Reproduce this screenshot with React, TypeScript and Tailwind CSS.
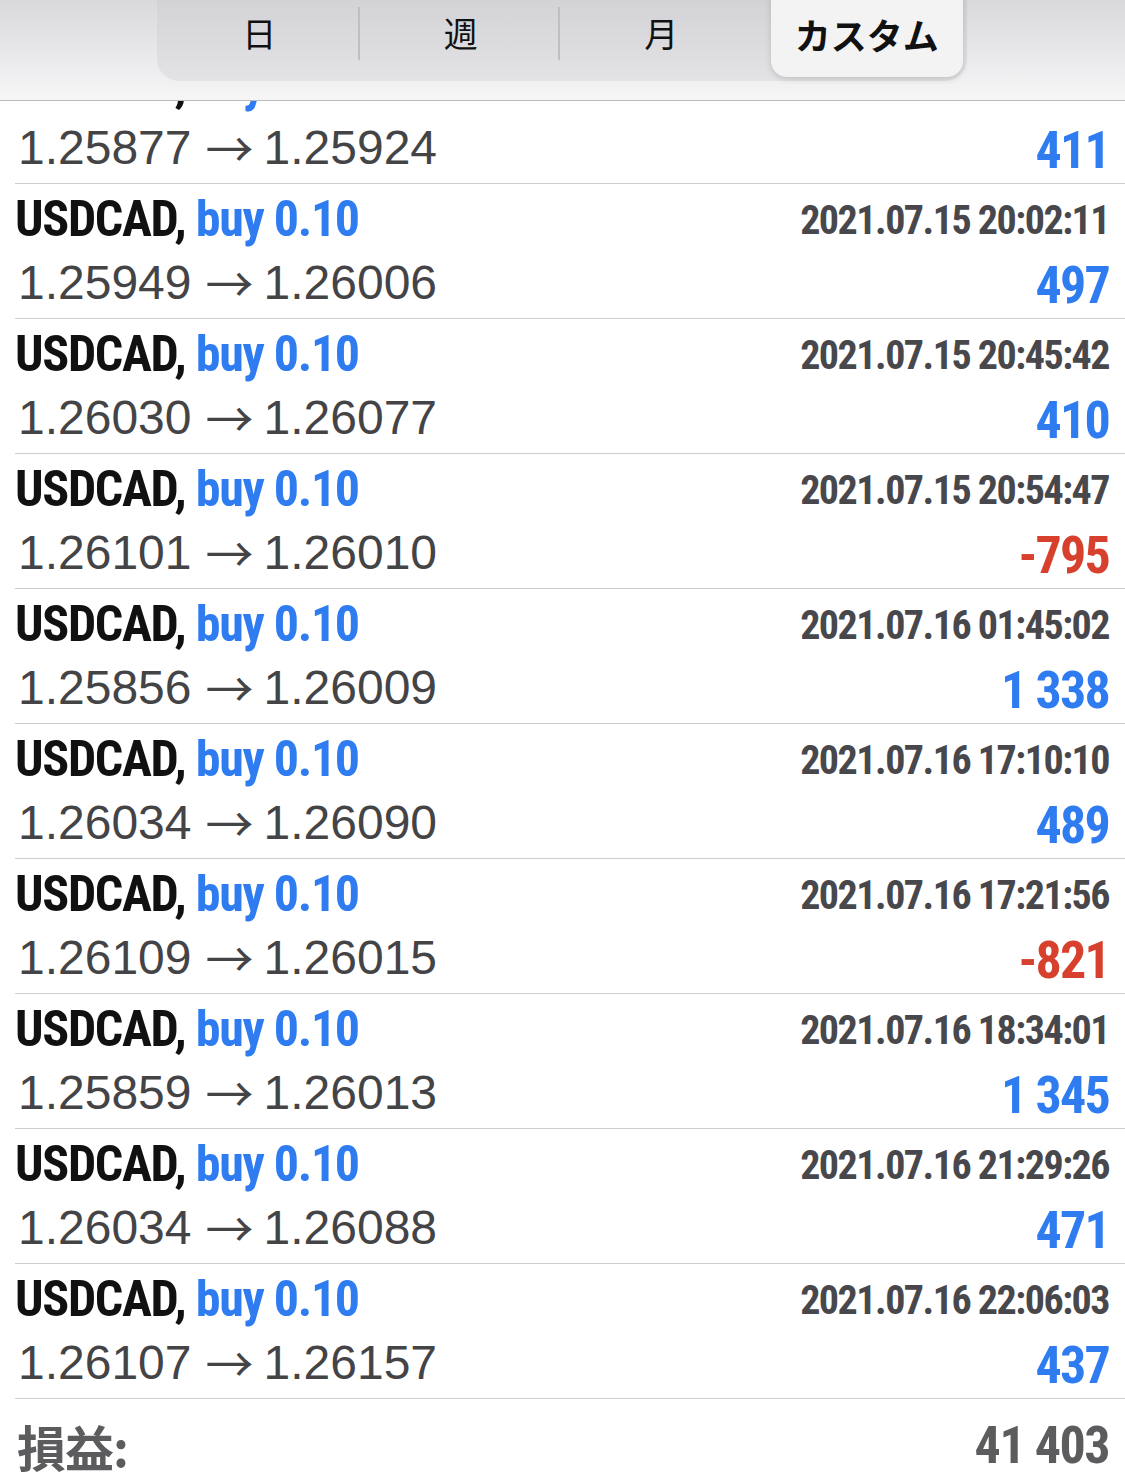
import React from "react";

const condensed = {
  fontFamily: '"Roboto Condensed", "Liberation Sans Narrow", "DejaVu Sans Condensed", "Liberation Sans", sans-serif',
};

const trades = [
  { time: "2021.07.15 19:48:30", from: "1.25877", to: "1.25924", profit: "411" },
  { time: "2021.07.15 20:02:11", from: "1.25949", to: "1.26006", profit: "497" },
  { time: "2021.07.15 20:45:42", from: "1.26030", to: "1.26077", profit: "410" },
  { time: "2021.07.15 20:54:47", from: "1.26101", to: "1.26010", profit: "-795" },
  { time: "2021.07.16 01:45:02", from: "1.25856", to: "1.26009", profit: "1 338" },
  { time: "2021.07.16 17:10:10", from: "1.26034", to: "1.26090", profit: "489" },
  { time: "2021.07.16 17:21:56", from: "1.26109", to: "1.26015", profit: "-821" },
  { time: "2021.07.16 18:34:01", from: "1.25859", to: "1.26013", profit: "1 345" },
  { time: "2021.07.16 21:29:26", from: "1.26034", to: "1.26088", profit: "471" },
  { time: "2021.07.16 22:06:03", from: "1.26107", to: "1.26157", profit: "437" },
];

const tabs = ["日", "週", "月", "カスタム"];

const Header = () => {
  return (
    <div className="h-[101px] shrink-0 border-b border-[#b9b9bd] bg-gradient-to-b from-[#d9d9dc] to-[#f6f6f7] flex justify-start">
      <div className="ml-[157px] -mt-[20px] h-[101px] w-[810px] rounded-b-[22px] bg-gradient-to-b from-[#cfcfd3] to-[#e3e3e6] flex items-stretch p-[4px] pt-[20px]">
        {tabs.map((tab, i) => {
          const active = i === tabs.length - 1;
          return (
            <div key={tab} className="flex-1 flex items-stretch">
              {i > 0 && i < tabs.length - 1 && (
                <div className="w-[2px] my-[7px] mb-[17px] bg-[#bfbfc3] -ml-[4px] mr-[4px]" />
              )}
              <div
                className={
                  active
                    ? "flex-1 -mt-[20px] ml-[8px] rounded-[16px] bg-[#f3f3f4] shadow-[0_2px_6px_rgba(0,0,0,0.15)] flex items-center justify-center pt-[16px] pb-[6px]"
                    : "flex-1 flex items-center justify-center pb-[12px] pr-[4px]"
                }
              >
                <span
                  className={active ? "text-[36px] font-semibold text-[#111]" : "text-[34px] text-[#111]"}
                  style={{ fontFamily: '"Noto Sans CJK JP", sans-serif' }}
                >
                  {tab}
                </span>
              </div>
            </div>
          );
        })}
      </div>
    </div>
  );
};

const TradeRow = ({ t }: { t: (typeof trades)[number] }) => {
  const negative = t.profit.startsWith("-");
  return (
    <div className="ml-[15px] h-[135px] border-b border-[#cdcdd0] pr-[16px] flex flex-col">
      <div className="h-[70px] flex items-end justify-between pb-[10px]">
        <div className="text-[50px] leading-none font-bold tracking-[-1.3px]" style={condensed}>
          <span className="text-[#111]">USDCAD,</span>{" "}
          <span className="text-[#2f7cf1]">buy 0.10</span>
        </div>
        <div className="text-[40px] leading-none font-bold tracking-[-1.5px] text-[#48484c] pb-[3px]" style={condensed}>
          {t.time}
        </div>
      </div>
      <div className="h-[64px] flex items-start justify-between">
        <div
          className="text-[48px] leading-none text-[#444447] pt-[5px] pl-[3px] flex items-center"
          style={{ fontFamily: '"Liberation Sans", "DejaVu Sans", sans-serif' }}
        >
          <span>{t.from}</span>
          <span
            className="ml-[14px] mr-[10px] text-[48px] leading-none -mt-[4px]"
            style={{ fontFamily: '"Noto Sans CJK JP", sans-serif' }}
          >
            →
          </span>
          <span>{t.to}</span>
        </div>
        <div
          className={`text-[52px] leading-none font-bold tracking-[-1.8px] pt-[6px] ${negative ? "text-[#d6402d]" : "text-[#2f7cf1]"}`}
          style={condensed}
        >
          {t.profit}
        </div>
      </div>
    </div>
  );
};

export default function App() {
  return (
    <div className="w-[1125px] h-[1478px] bg-white overflow-hidden flex flex-col">
      <Header />
      <div className="flex-1 overflow-hidden flex flex-col">
        <div className="-mt-[52px] flex flex-col">
          {trades.map((t, i) => (
            <TradeRow key={i} t={t} />
          ))}
        </div>
        <div className="flex-1 flex items-center justify-between pl-[17px] pr-[16px] pt-[10px]">
          <span
            className="text-[49px] font-bold text-[#5c5c5e] tracking-[-1px]"
            style={{ fontFamily: '"Noto Sans CJK JP", sans-serif' }}
          >
            損益:
          </span>
          <span className="text-[52px] leading-none font-bold tracking-[-1.5px] text-[#5c5c5e]" style={condensed}>
            41 403
          </span>
        </div>
      </div>
    </div>
  );
}
